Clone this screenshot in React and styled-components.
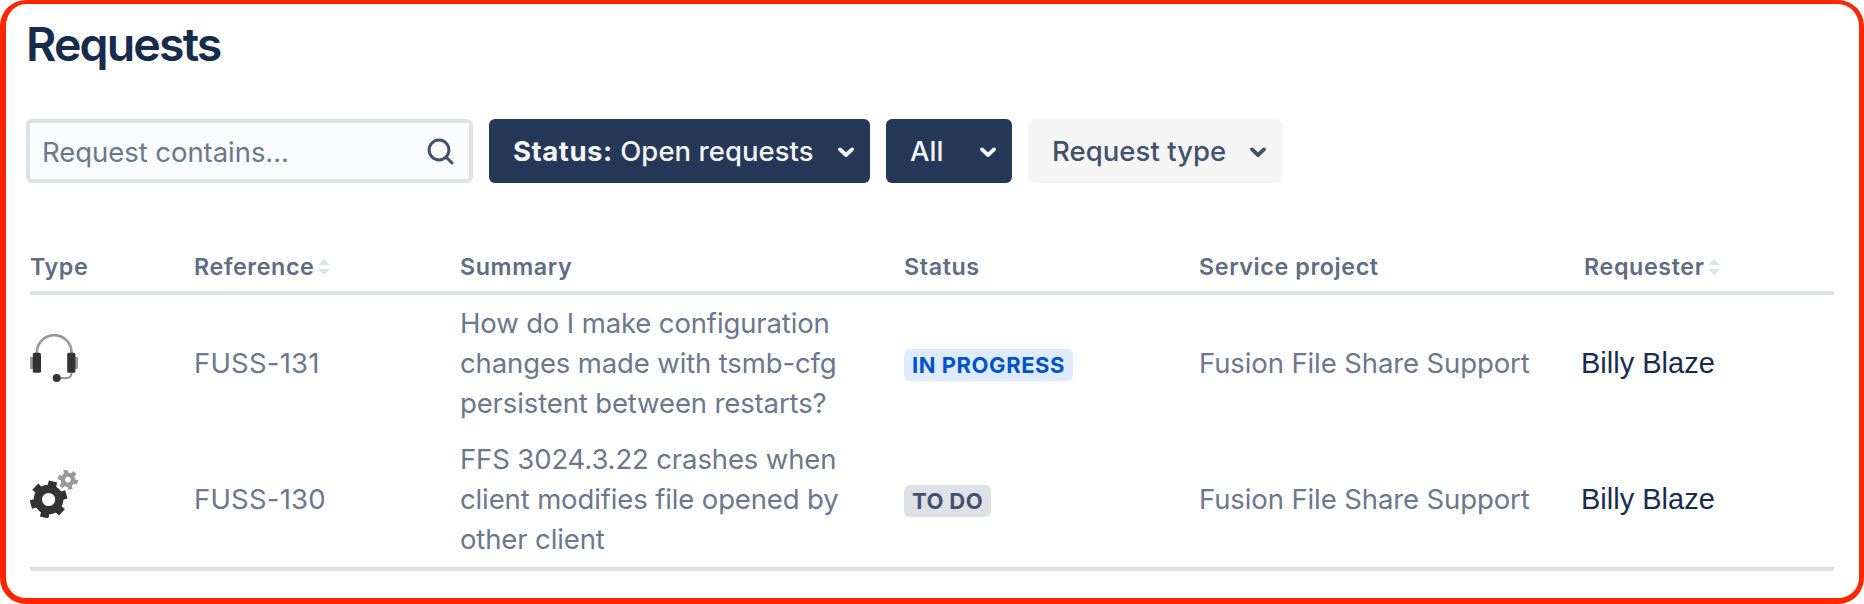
import React from 'react'
import styled, { createGlobalStyle } from 'styled-components'

const columns = [
  { label: 'Type' },
  { label: 'Reference', sortable: true },
  { label: 'Summary' },
  { label: 'Status' },
  { label: 'Service project' },
  { label: 'Requester', sortable: true, indent: 3 },
]

const requests = [
  {
    icon: 'support',
    reference: 'FUSS-131',
    summary: ['How do I make configuration', 'changes made with tsmb-cfg', 'persistent between restarts?'],
    status: 'In progress',
    active: true,
    project: 'Fusion File Share Support',
    requester: 'Billy Blaze',
  },
  {
    icon: 'system',
    reference: 'FUSS-130',
    summary: ['FFS 3024.3.22 crashes when', 'client modifies file opened by', 'other client'],
    status: 'To do',
    project: 'Fusion File Share Support',
    requester: 'Billy Blaze',
  },
]

function SearchIcon() {
  return (
    <svg width="28" height="28" viewBox="0 0 28 28" fill="none" stroke="#42526e" strokeWidth="3" strokeLinecap="round">
      <circle cx="12" cy="12" r="9.9" />
      <path d="M19.4 19.4L25 25" />
    </svg>
  )
}

function Chevron() {
  return (
    <svg width="16" height="12" viewBox="0 0 16 12" fill="none" stroke="currentColor" strokeWidth="3.8" strokeLinecap="round" strokeLinejoin="round">
      <path d="M2 3.4L8 9L14 3.4" />
    </svg>
  )
}

function SortIcon() {
  return (
    <svg width="12" height="16" viewBox="0 0 12 16" fill="#dfe1e6">
      <path d="M6 0L12 6H0z" />
      <path d="M6 16L12 10H0z" />
    </svg>
  )
}

function HeadsetIcon() {
  return (
    <svg width="48" height="48" viewBox="0 0 48 48" fill="none">
      <path d="M6.9 20V18.4A17.3 17.3 0 0 1 41.5 18.4V20" stroke="#999" strokeWidth="2.6" />
      <path d="M41.6 38.5C41.6 42 40.2 44 36.8 44H27" stroke="#999" strokeWidth="2.2" />
      <rect x="0" y="23" width="4" height="12" fill="#999" />
      <rect x="44" y="23" width="4" height="12" fill="#999" />
      <rect x="2.8" y="18.8" width="8.2" height="20" rx="1.6" fill="#333" />
      <rect x="37.2" y="18.8" width="8.2" height="20" rx="1.6" fill="#333" />
      <circle cx="26.7" cy="44" r="4" fill="#333" />
    </svg>
  )
}

function Gear({ cx, cy, body, outer, hole, tooth, start, color }) {
  return (
    <g transform={`translate(${cx} ${cy})`} fill={color}>
      <circle r={(body + hole) / 2} fill="none" stroke={color} strokeWidth={body - hole} />
      {[0, 60, 120, 180, 240, 300].map((angle) => (
        <rect
          key={angle}
          x={body - 2}
          y={-tooth / 2}
          width={outer - body + 2}
          height={tooth}
          transform={`rotate(${start + angle})`}
        />
      ))}
    </g>
  )
}

function GearsIcon() {
  return (
    <svg width="48" height="48" viewBox="0 0 48 48">
      <Gear cx={18.6} cy={29.5} body={14.8} outer={18.5} hole={6.6} tooth={8.6} start={-76} color="#333" />
      <Gear cx={37.9} cy={9.7} body={7.2} outer={10} hole={2.9} tooth={4.4} start={-45} color="#999" />
    </svg>
  )
}

export default function App() {
  return (
    <>
      <GlobalStyle />
      <Panel>
        <Title>Requests</Title>
        <Toolbar>
          <SearchBox>
            <SearchInput placeholder="Request contains..." />
            <SearchIcon />
          </SearchBox>
          <FilterButton $selected $width={381}>
            <span><strong>Status:</strong> Open requests</span>
            <Chevron />
          </FilterButton>
          <FilterButton $selected $width={126}>
            <span>All</span>
            <Chevron />
          </FilterButton>
          <FilterButton $width={254}>
            <span>Request type</span>
            <Chevron />
          </FilterButton>
        </Toolbar>
        <Table>
          <HeaderRow>
            {columns.map((column) => (
              <HeaderCell key={column.label} $indent={column.indent}>
                {column.label}
                {column.sortable && <SortIcon />}
              </HeaderCell>
            ))}
          </HeaderRow>
          {requests.map((request) => (
            <Row key={request.reference}>
              <IconCell>{request.icon === 'support' ? <HeadsetIcon /> : <GearsIcon />}</IconCell>
              <Reference>{request.reference}</Reference>
              <Summary>
                {request.summary.map((line) => <div key={line}>{line}</div>)}
              </Summary>
              <StatusCell><Lozenge $active={request.active}>{request.status}</Lozenge></StatusCell>
              <Cell>{request.project}</Cell>
              <Requester>{request.requester}</Requester>
            </Row>
          ))}
        </Table>
      </Panel>
    </>
  )
}

const GlobalStyle = createGlobalStyle`
  * {
    box-sizing: border-box;
  }
  body {
    margin: 0;
    background: #fff;
    font-family: Inter, sans-serif;
  }
`

const Panel = styled.div`
  width: 1864px;
  height: 604px;
  padding: 12px 24px 0 20px;
  border: solid #ff2600;
  border-width: 4px 5px 6px 6px;
  border-radius: 26px;
  background: #fff;
`

const Title = styled.h1`
  margin: 0 0 47px;
  color: #172b4d;
  font-size: 46.5px;
  font-weight: 600;
  line-height: 56px;
  letter-spacing: -1.85px;
`

const Toolbar = styled.div`
  display: flex;
  gap: 16px;
`

const SearchBox = styled.label`
  display: flex;
  align-items: center;
  width: 447px;
  height: 64px;
  padding: 2px 14px 0 12px;
  border: 4px solid #dfe1e6;
  border-radius: 6px;
  background: #fafbfc;
`

const SearchInput = styled.input`
  flex: 1;
  min-width: 0;
  padding: 0;
  border: 0;
  outline: 0;
  background: transparent;
  font: 400 27.5px/36px Inter, sans-serif;
  letter-spacing: -0.05px;
  &::placeholder {
    color: #6b778c;
    opacity: 1;
  }
`

const FilterButton = styled.button`
  display: flex;
  align-items: center;
  justify-content: space-between;
  width: ${(props) => props.$width}px;
  height: 64px;
  padding: 0 16px 0 24px;
  border: 0;
  border-radius: 6px;
  background: ${(props) => (props.$selected ? '#253858' : '#f5f5f5')};
  color: ${(props) => (props.$selected ? '#f4f5f7' : '#42526e')};
  font: 500 27.5px/36px Inter, sans-serif;
  letter-spacing: 0.05px;
  white-space: nowrap;
  strong {
    font-weight: 700;
    letter-spacing: 0.55px;
  }
  svg {
    position: relative;
    top: 1px;
  }
`

const Table = styled.div`
  width: 1804px;
  margin: 52px 0 0 4px;
  border-bottom: 4px solid #dfe1e6;
`

const HeaderRow = styled.div`
  display: grid;
  grid-template-columns: 164px 266px 444px 295px 382px 253px;
  height: 60px;
  padding-top: 18px;
  border-bottom: 4px solid #dfe1e6;
`

const HeaderCell = styled.div`
  display: flex;
  align-items: center;
  gap: 4px;
  height: 28px;
  padding-left: ${(props) => props.$indent || 0}px;
  color: #5e6c84;
  font-size: 23.3px;
  font-weight: 600;
  line-height: 28px;
  letter-spacing: 0.6px;
`

const Row = styled.div`
  display: grid;
  grid-template-columns: 164px 266px 444px 295px 382px 253px;
  align-items: center;
  height: 136px;
`

const Cell = styled.div`
  color: #6b778c;
  font-size: 27.5px;
  line-height: 40px;
  letter-spacing: -0.11px;
  white-space: nowrap;
`

const Reference = styled(Cell)`
  letter-spacing: 0.2px;
`

const Summary = styled(Cell)`
  letter-spacing: -0.13px;
`

const IconCell = styled.div`
  display: flex;
  padding-bottom: 10px;
`

const StatusCell = styled.div`
  display: flex;
  padding-top: 4px;
`

const Lozenge = styled.span`
  height: 32px;
  padding: 0 8px;
  border-radius: 6px;
  background: ${(props) => (props.$active ? '#deebff' : '#dfe1e6')};
  color: ${(props) => (props.$active ? '#0052cc' : '#42526e')};
  font-size: 22px;
  font-weight: 700;
  line-height: 32px;
  letter-spacing: ${(props) => (props.$active ? 0.55 : 0.4)}px;
  text-transform: uppercase;
`

const Requester = styled(Cell)`
  color: #172b4d;
  font-family: 'Liberation Sans', sans-serif;
  font-size: 29px;
  letter-spacing: 0;
`
